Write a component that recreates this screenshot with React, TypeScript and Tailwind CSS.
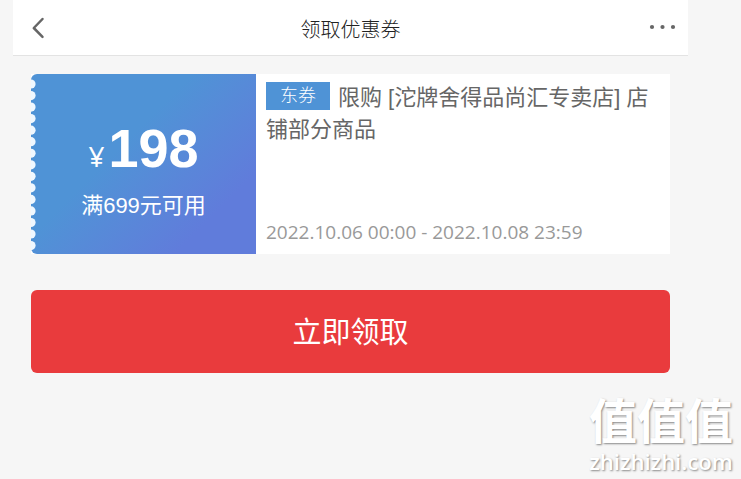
import { ReactNode } from "react";

const coupon = {
  amount: "198",
  condition: "满699元可用",
  tag: "东券",
  scope: "限购 [沱牌舍得品尚汇专卖店] 店铺部分商品",
  period: "2022.10.06 00:00 - 2022.10.08 23:59",
};

const notches = Array.from({ length: 15 }, (_, i) => 10 + i * 11.54);

function IconButton({ label, children }: { label: string; children: ReactNode }) {
  return (
    <button type="button" aria-label={label} className="flex items-center text-[#666666]">
      {children}
    </button>
  );
}

function Header() {
  return (
    <header className="flex h-14 items-center justify-between border-b border-[#e3e3e3] bg-white px-3">
      <IconButton label="返回">
        <svg width="28" height="28" viewBox="0 0 28 28" fill="none">
          <path
            d="M17.5 5 8.8 14l8.7 8.8"
            stroke="currentColor"
            strokeWidth="2.5"
            strokeLinecap="round"
            strokeLinejoin="round"
          />
        </svg>
      </IconButton>
      <h1 className="pt-1 text-xl font-light text-[#222222]">领取优惠券</h1>
      <IconButton label="更多">
        <svg width="28" height="28" viewBox="0 0 28 28" fill="currentColor">
          <circle cx="4" cy="13" r="2.1" />
          <circle cx="14.5" cy="13" r="2.1" />
          <circle cx="25" cy="13" r="2.1" />
        </svg>
      </IconButton>
    </header>
  );
}

function Coupon() {
  return (
    <section className="flex h-[180px] bg-white">
      <div className="relative flex w-[225px] shrink-0 flex-col items-center rounded-l-md bg-linear-135 from-[#4f93d6] from-40% to-[#607cdb] to-80% pt-11 text-white">
        {/* Perforated edge */}
        <svg className="absolute top-0 left-0" width="6" height="180" fill="#f0f8ff">
          {notches.map((y) => (
            <circle key={y} cx="0" cy={y} r="4.6" />
          ))}
        </svg>
        <p className="flex items-baseline gap-1 leading-[60px]">
          <span className="font-['Open_Sans',sans-serif] text-[28px]">¥</span>
          <strong className="text-[54px] font-bold">{coupon.amount}</strong>
        </p>
        <p className="mt-1 text-[22px] leading-8">{coupon.condition}</p>
      </div>
      <div className="flex flex-1 flex-col justify-between px-[10px] pt-2 pb-2">
        <p className="text-[22px] leading-8 text-[#666666]">
          <span className="mr-2 inline-block bg-[#4f93d6] px-[14px] align-top text-lg leading-7 font-light text-white">
            {coupon.tag}
          </span>
          {coupon.scope}
        </p>
        <p className="font-['Open_Sans',sans-serif] text-[19px] leading-7 text-[#999999]">
          {coupon.period}
        </p>
      </div>
    </section>
  );
}

function Watermark() {
  return (
    <div className="absolute right-2 bottom-1 text-center text-white [text-shadow:1px_1px_2px_#888888]">
      <p className="text-5xl leading-12 font-bold">值值值</p>
      <p className="font-['Open_Sans',sans-serif] text-[22px] leading-7 font-semibold">
        zhizhizhi.com
      </p>
    </div>
  );
}

export default function App() {
  return (
    <div className="relative min-h-screen bg-[#f6f6f6] pr-[53px] pl-[13px] font-['Liberation_Sans','Noto_Sans_CJK_SC',sans-serif]">
      <Header />
      <main className="flex flex-col gap-9 px-[18px] pt-[18px]">
        <Coupon />
        <button
          type="button"
          className="h-[83px] rounded-md bg-[#e93b3d] pt-1 text-[29px] text-white"
        >
          立即领取
        </button>
      </main>
      <Watermark />
    </div>
  );
}
